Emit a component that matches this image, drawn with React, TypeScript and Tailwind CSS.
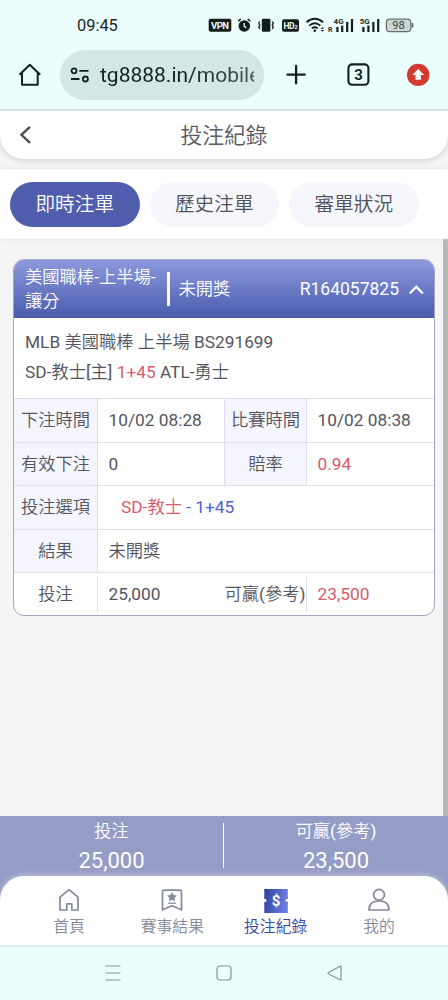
import type { ReactNode } from 'react';

function StatusBar() {
  return (
    <div className="flex h-[50px] items-center pl-[77px]">
      <span className="w-[131px] pt-[2px] text-[16.4px] leading-5 text-[#1b2424]">09:45</span>
      <svg width="206" height="20" viewBox="208 15 206 20" fill="none" stroke="#141c1c">
        <rect x="208.7" y="18.7" width="22.6" height="13" rx="2" fill="#141c1c" stroke="none" />
        <text x="220" y="29.1" textAnchor="middle" fontSize="9.5" fontWeight="700" fill="#ebfdfc" stroke="none" textLength="18">VPN</text>
        <circle cx="244.3" cy="26" r="5.8" fill="#141c1c" stroke="none" />
        <path d="M238.3 21.2l2.6-2.2M250.3 21.2l-2.6-2.2" strokeWidth="1.6" />
        <path d="M244.2 23v3.4l2 1.2" stroke="#ebfdfc" strokeWidth="1.3" />
        <rect x="261.8" y="18.8" width="8.6" height="13" rx="1.4" fill="#141c1c" stroke="none" />
        <path d="M259.8 21.5l-1 1.8 1 1.8-1 1.8 1 2M272.3 21.5l1 1.8-1 1.8 1 1.8-1 2" strokeWidth="1.3" />
        <rect x="282" y="19.3" width="17" height="12.5" rx="2" fill="#141c1c" stroke="none" />
        <text x="283.6" y="29" fontSize="8.5" fontWeight="700" fill="#ebfdfc" stroke="none" textLength="11">HD</text>
        <text x="294.2" y="29" fontSize="6" fontWeight="700" fill="#ebfdfc" stroke="none">2</text>
        <path d="M306.5 22.3q8.3-7 16.6 0M309.2 25.6q5.6-4.6 11.2 0M311.8 28.4q3-2.4 6 0" strokeWidth="1.8" />
        <circle cx="314.8" cy="30.7" r="1.3" fill="#141c1c" stroke="none" />
        <path d="M320.7 28.8l1.7-1.8 1.7 1.8zM320.7 30l1.7 1.8 1.7-1.8z" fill="#141c1c" stroke="none" />
        <text x="328" y="32" fontSize="7" fontWeight="700" fill="#273030" stroke="none">R</text>
        <text x="333.6" y="24" fontSize="8" fontWeight="700" fill="#273030" stroke="none" textLength="10">4G</text>
        <path d="M337.4 27v5M342.2 25.5v6.5M347.2 22v10M352 19v13" strokeWidth="2.2" />
        <text x="359.7" y="24" fontSize="8" fontWeight="700" fill="#273030" stroke="none" textLength="10">5G</text>
        <path d="M363.4 27v5M368.4 25.5v6.5M373.4 22v10M378.2 19v13" strokeWidth="2.2" />
        <rect x="386.4" y="19.2" width="24.4" height="12.4" rx="3.4" fill="#cbd6d5" stroke="#66706f" strokeWidth="1.2" />
        <path d="M412.5 23v4.5" strokeWidth="1.8" stroke="#66706f" />
        <text x="398.5" y="29" textAnchor="middle" fontSize="10.5" fill="#344040" stroke="none" textLength="12.5" lengthAdjust="spacingAndGlyphs">98</text>
      </svg>
    </div>
  );
}

function BrowserBar() {
  return (
    <div className="flex h-[61px] items-start border-b-2 border-[#dcebea] text-[#152121]">
      <svg className="ml-[18px] mt-[13px] shrink-0" width="24" height="24" viewBox="0 0 24 24" fill="none" stroke="currentColor" strokeWidth="2" strokeLinejoin="round">
        <path d="M1.5 11.7L11.8 1.8l10.4 9.9M4 10v11.8h15.7V10" />
      </svg>
      <div className="ml-[18px] flex h-[50px] w-[204px] items-center rounded-full bg-[#d1e8e6] pl-[10px]">
        <svg className="shrink-0" width="20" height="16" viewBox="0 0 20 16" fill="none" stroke="currentColor" strokeWidth="1.8">
          <circle cx="4" cy="3.8" r="2.5" />
          <path d="M9.3 3.8H18.5M1 12h8.5" />
          <circle cx="15.4" cy="12" r="2.5" />
        </svg>
        <span className="ml-[10px] w-[154px] overflow-hidden whitespace-nowrap bg-gradient-to-r from-[#182222] from-55% to-[#4d5b59] bg-clip-text text-[21px] leading-7 text-transparent">tg8888.in/mobile</span>
      </div>
      <svg className="ml-[22px] mt-[14px] shrink-0" width="20" height="22" viewBox="0 0 20 22" stroke="currentColor" strokeWidth="2.3" strokeLinecap="round">
        <path d="M1.5 10.7h17.2M10.1 2v17.4" />
      </svg>
      <svg className="ml-[40px] mt-[13px] shrink-0" width="24" height="24" viewBox="0 0 24 24" fill="none">
        <rect x="2.4" y="1.4" width="20" height="20.4" rx="3.8" stroke="currentColor" strokeWidth="2.1" />
        <text x="12.5" y="16.8" textAnchor="middle" fontSize="15" fontWeight="700" fill="currentColor">3</text>
      </svg>
      <svg className="ml-[36px] mt-[13px] shrink-0" width="24" height="24" viewBox="0 0 24 24">
        <circle cx="12.2" cy="11.9" r="11.2" fill="#d33a30" />
        <path d="M12.2 6l6 6h-3.3v4.8H9.5V12H6.2z" fill="#fff" />
      </svg>
    </div>
  );
}

function Label({ children, edge = false }: { children: ReactNode; edge?: boolean }) {
  return (
    <div className={`flex shrink-0 items-center justify-center whitespace-nowrap border-r border-[#dedeef] bg-[#f5f6fd] pt-[2px] ${edge ? 'w-[84px]' : 'w-[83px] border-l'}`}>
      {children}
    </div>
  );
}

function TicketCard() {
  return (
    <section className="ml-[13px] mt-5 h-[357px] w-[422px] shrink-0 overflow-hidden rounded-[11px] border border-[#a5a6c6] bg-white text-[17.3px] text-[#54555e]">
      <header className="flex h-[58px] items-center bg-gradient-to-b from-[#8c99dc] to-[#4b5cae] text-white">
        <div className="ml-[11px] w-[142px] whitespace-nowrap leading-6">美國職棒-上半場-<br />讓分</div>
        <div className="h-[34px] w-[2.5px] bg-white" />
        <div className="ml-[9px] pt-px">未開獎</div>
        <div className="ml-auto text-[17.5px]">R164057825</div>
        <svg className="ml-[10px] mr-[10px] mt-px" width="15" height="10" viewBox="0 0 15 10" fill="none" stroke="white" strokeWidth="2.2">
          <path d="M.8 8.6L7.3 1.7l6.6 6.9" />
        </svg>
      </header>
      <div className="h-[80px] pl-[11px] pt-[9px] leading-[30px]">
        <p>MLB 美國職棒 上半場 BS291699</p>
        <p>SD-教士[主] <span className="text-[#d65c6b]">1+45</span> ATL-勇士</p>
      </div>
      <div className="flex h-[43.5px] border-t border-[#dedeef]">
        <Label edge>下注時間</Label>
        <div className="flex w-[126px] items-center pl-[10.5px] pt-[2px]">10/02 08:28</div>
        <Label>比賽時間</Label>
        <div className="flex items-center pl-[10.5px] pt-[2px]">10/02 08:38</div>
      </div>
      <div className="flex h-[43.5px] border-t border-[#dedeef]">
        <Label edge>有效下注</Label>
        <div className="flex w-[126px] items-center pl-[10.5px] pt-[2px]">0</div>
        <Label>賠率</Label>
        <div className="flex items-center pl-[10.5px] pt-[2px] text-[#d65c6b]">0.94</div>
      </div>
      <div className="flex h-[43.5px] border-t border-[#dedeef]">
        <Label edge>投注選項</Label>
        <div className="flex items-center whitespace-pre pl-[23px] pt-[2px] text-[#4d63cf]"><span className="text-[#d65c6b]">SD-教士</span> - 1+45</div>
      </div>
      <div className="flex h-[43.5px] border-t border-[#dedeef]">
        <Label edge>結果</Label>
        <div className="flex items-center pl-[10.5px] pt-[2px]">未開獎</div>
      </div>
      <div className="flex h-[43.5px] items-center border-t border-[#dedeef]">
        <div className="flex h-[35px] w-[84px] items-center justify-center border-r border-[#dedeef] pt-[2px]">投注</div>
        <div className="w-[126px] pl-[10.5px] pt-[2px]">25,000</div>
        <div className="flex h-[35px] w-[83px] items-center justify-center whitespace-nowrap border-r border-[#dedeef] pt-[2px]">可贏(參考)</div>
        <div className="pl-[10.5px] pt-[2px] text-[#d65c6b]">23,500</div>
      </div>
    </section>
  );
}

function NavItem({ label, active = false, children }: { label: string; active?: boolean; children: ReactNode }) {
  return (
    <div className={`flex w-[103.3px] flex-col items-center ${active ? 'text-[#3647a4]' : 'text-[#858a9c]'}`}>
      <svg width="26" height="26" viewBox="0 0 26 26" fill="none" stroke="currentColor" strokeWidth="1.7" strokeLinejoin="round">{children}</svg>
      <span className="mt-[2px] text-[15.8px] leading-6">{label}</span>
    </div>
  );
}

export default function App() {
  return (
    <div className="flex h-[1000px] w-[448px] flex-col overflow-hidden bg-[#ebfdfc] font-[Roboto,'Noto_Sans_CJK_TC_DemiLight','Noto_Sans_CJK_TC',sans-serif]">
      <StatusBar />
      <BrowserBar />
      <main className="flex h-[834px] flex-col bg-[#f5f5f5]">
        <header className="flex h-12 shrink-0 items-center rounded-b-[24px] bg-white shadow-[0_2px_6px_rgba(0,0,0,0.13)]">
          <svg className="ml-[19px]" width="13" height="20" viewBox="0 0 13 20" fill="none" stroke="#4c4e57" strokeWidth="2.4">
            <path d="M11 1.8L2.4 9.8l8.6 8" />
          </svg>
          <h1 className="mr-8 flex-1 pt-[3px] text-center text-[21.8px] text-[#5a5b65]">投注紀錄</h1>
        </header>
        <nav className="mt-[10px] flex h-[70px] shrink-0 items-center gap-[10px] bg-white pl-[10px] text-[19.7px] text-[#50525c] shadow-[0_0_5px_rgba(0,0,0,0.09)]">
          <div className="flex h-[45px] w-[129.5px] items-center justify-center rounded-full bg-[#4f5dad] pt-[2px] text-white">即時注單</div>
          <div className="flex h-[45px] w-[129.5px] items-center justify-center rounded-full bg-[#f6f7fc] pt-[2px]">歷史注單</div>
          <div className="flex h-[45px] w-[129.5px] items-center justify-center rounded-full bg-[#f6f7fc] pt-[2px]">審單狀況</div>
        </nav>
        <div className="flex h-[577px] shrink-0 items-start justify-between">
          <TicketCard />
          <div className="h-full w-[5px] shrink-0 bg-[#b9b9b9]" />
        </div>
        <div className="flex h-[129px] shrink-0 flex-col overflow-hidden bg-[#959dc6]">
          <div className="flex h-[60px] shrink-0 text-center text-white">
            <div className="w-[223px] pt-[2px]">
              <div className="text-[17.3px] leading-[26px]">投注</div>
              <div className="text-[22px] leading-[33px]">25,000</div>
            </div>
            <div className="mt-[7px] h-[45px] w-px bg-white" />
            <div className="w-[224px] pt-[2px]">
              <div className="text-[17.3px] leading-[26px]">可贏(參考)</div>
              <div className="text-[22px] leading-[33px]">23,500</div>
            </div>
          </div>
          <nav className="flex h-[69px] shrink-0 justify-center rounded-t-[24px] bg-white pt-[11px] shadow-[0_-2px_5px_rgba(255,255,255,0.3)]">
            <NavItem label="首頁">
              <path d="M4 10.2l9-7.5 9 7.5V23h-6.2v-6.2h-5V23H4z" />
            </NavItem>
            <NavItem label="賽事結果">
              <path d="M3.5 5.2q0-2 2-2h15q2 0 2 2v17.6L13 18.7l-9.5 4.1z" />
              <path d="M13 5l1.6 3.1 3.3.5-2.4 2.4.6 3.4-3.1-1.7-3.1 1.7.6-3.4-2.4-2.4 3.3-.5z" fill="currentColor" stroke="none" />
              <path d="M9 16.2h8" strokeWidth="1.2" />
            </NavItem>
            <NavItem label="投注紀錄" active>
              <defs>
                <linearGradient id="ticket" x1="0" y1="0" x2="1" y2="0.2">
                  <stop stopColor="#2d3f9f" />
                  <stop offset="1" stopColor="#6c7fe0" />
                </linearGradient>
              </defs>
              <path d="M1.3 2h23.5v9.3a2.2 2.2 0 0 0 0 4.4V26H1.3V15.7a2.2 2.2 0 0 0 0-4.4z" fill="url(#ticket)" stroke="none" />
              <path d="M1.3 10.3l2.5 1.7-2.5-.5zM24.8 10.3l-2.5 1.7 2.5-.5zM1.3 16.5l2.5-1.7-2.5.5zM24.8 16.5l-2.5-1.7 2.5.5z" fill="#25357f" stroke="none" />
              <text x="13" y="19" textAnchor="middle" fontSize="15" fontWeight="700" fill="white" stroke="none">$</text>
            </NavItem>
            <NavItem label="我的">
              <circle cx="13" cy="7.8" r="5.4" />
              <path d="M3 23q0-9 10-9t10 9z" />
            </NavItem>
          </nav>
        </div>
      </main>
      <footer className="flex flex-1 items-center justify-center gap-[95px] border-t-2 border-[#dcefed] text-[#849392]">
        <svg className="-mt-[2px]" width="16" height="16" viewBox="0 0 16 16" stroke="currentColor" strokeWidth="1.2"><path d="M.5 1h15M.5 8h15M.5 15h15" /></svg>
        <svg className="-mt-[2px]" width="16" height="16" viewBox="0 0 16 16" fill="none" stroke="currentColor" strokeWidth="1.2"><rect x="1" y="1" width="14" height="14" rx="3" /></svg>
        <svg className="-mt-[2px]" width="16" height="16" viewBox="0 0 16 16" fill="none" stroke="currentColor" strokeWidth="1.2" strokeLinejoin="round"><path d="M14 1.5v13q0 .8-.8.3L1.5 9q-1-.8 0-1.5L13.2 1.2q.8-.4.8.3z" /></svg>
      </footer>
    </div>
  );
}
